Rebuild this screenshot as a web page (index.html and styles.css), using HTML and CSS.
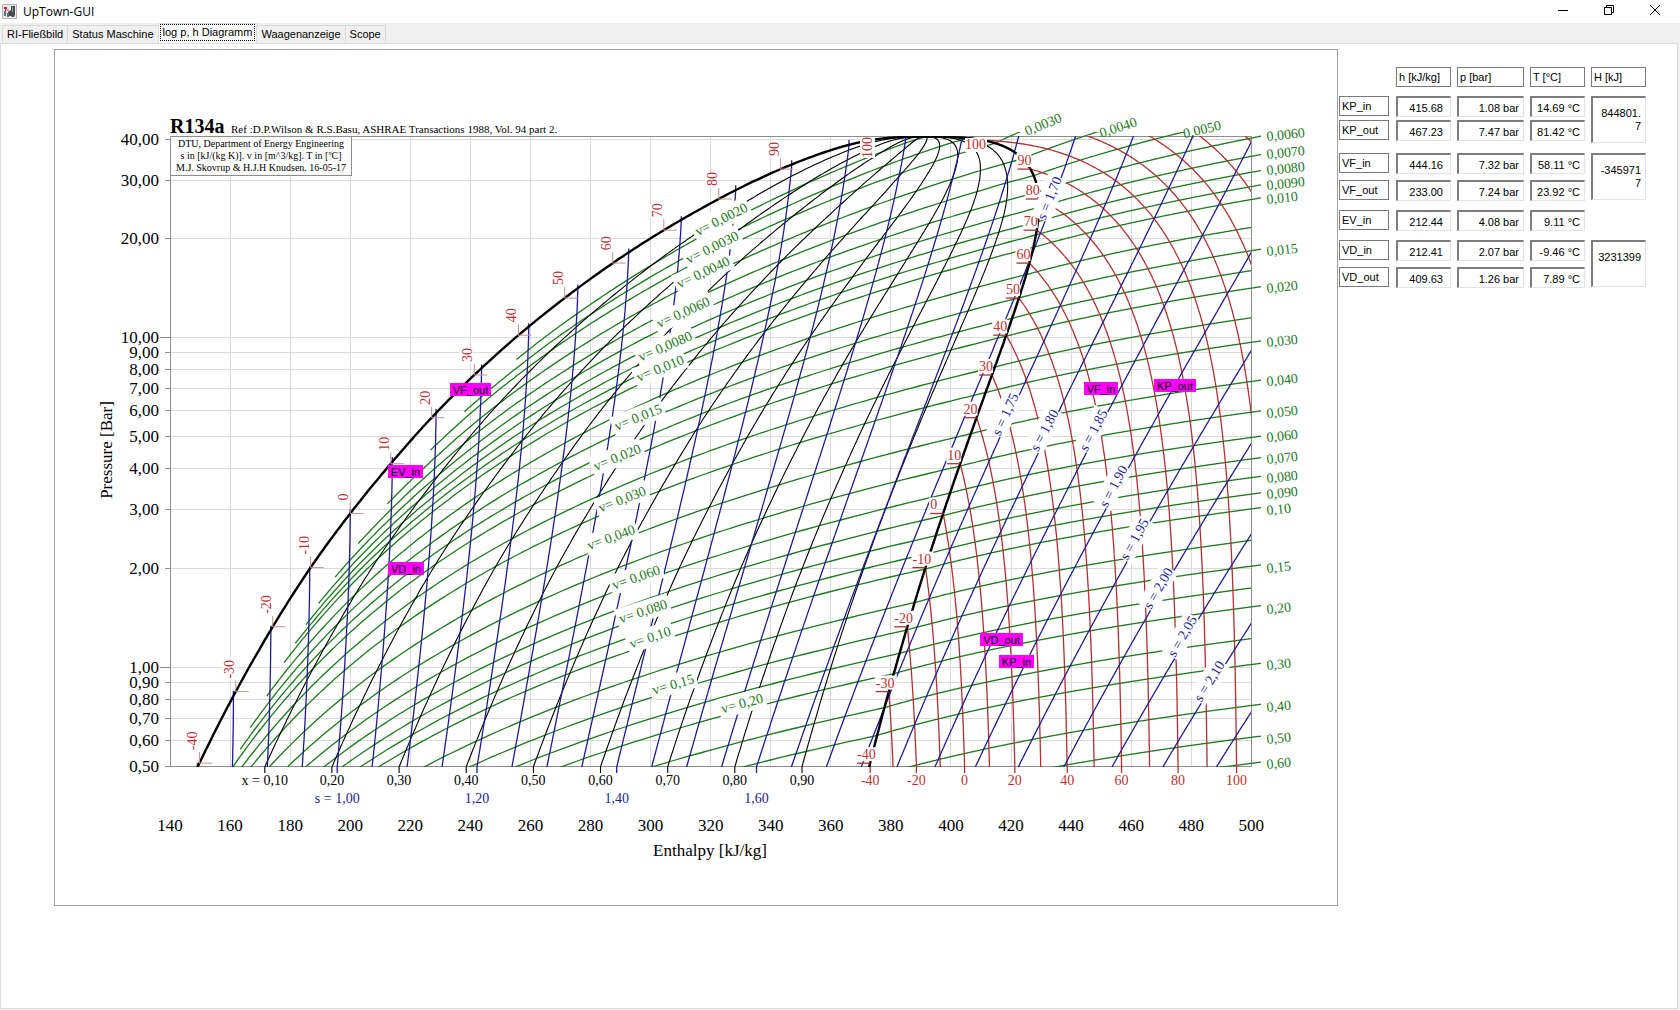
FILE: index.html
```html
<!DOCTYPE html>
<html lang="de">
<head>
<meta charset="utf-8">
<title>UpTown-GUI</title>
<link rel="stylesheet" href="styles.css">
</head>
<body>
<header class="titlebar">
  <svg class="app-icon" viewBox="0 0 15 15" aria-hidden="true">
    <rect x=".5" y=".5" width="14" height="14" fill="#ececec" stroke="#b5b5b5"/>
    <path d="M9 2h4v9l-1 2h-2l-1-1zM6 8l3-2v6H6z" fill="#4a4a4a"/>
    <path d="M10 3h1v5h-1z" fill="#999"/>
    <path d="M2 3h3v2H4v2H3V5H2z" fill="#d02030"/>
    <path d="M2 7h2v5H2zM5 9h2v4H5z" fill="#4c6fa0"/>
    <path d="M4 5h3v2H4z" fill="#e8a0a8"/>
  </svg>
  <span class="app-name">UpTown-GUI</span>
  <div class="window-buttons">
    <button type="button" aria-label="Minimieren"><svg viewBox="0 0 12 12"><path d="M1 6.500h10"/></svg></button>
    <button type="button" aria-label="Wiederherstellen"><svg viewBox="0 0 12 12"><path d="M1.500 3.500h7v7h-7zM3.500 3.500v-2h7v7h-2"/></svg></button>
    <button type="button" aria-label="Schließen"><svg viewBox="0 0 12 12"><path d="M1 1l10 10M11 1L1 11"/></svg></button>
  </div>
</header>
<nav class="tabs" role="tablist">
  <button type="button" role="tab" class="tab">RI-Fließbild</button>
  <button type="button" role="tab" class="tab">Status Maschine</button>
  <button type="button" role="tab" class="tab selected" aria-selected="true"><span class="focus">log p, h Diagramm</span></button>
  <button type="button" role="tab" class="tab">Waagenanzeige</button>
  <button type="button" role="tab" class="tab">Scope</button>
</nav>
<main class="page">
  <figure class="diagram">
    <svg id="chart" viewBox="55 50 1282 855" role="img" aria-label="log p, h Diagramm R134a"></svg>
  </figure>
  <aside class="readings">
    <table>
      <thead>
        <tr><td></td><th scope="col"><span class="name">h [kJ/kg]</span></th><th scope="col"><span class="name">p [bar]</span></th><th scope="col"><span class="name">T [°C]</span></th><th scope="col"><span class="name">H [kJ]</span></th></tr>
      </thead>
      <tbody>
        <tr class="h24"><th scope="row"><span class="name">KP_in</span></th><td><span class="value">415.68</span></td><td><span class="value">1.08 bar</span></td><td><span class="value">14.69 °C</span></td><td rowspan="2"><span class="value total">844801.7</span></td></tr>
        <tr class="h33"><th scope="row"><span class="name">KP_out</span></th><td><span class="value">467.23</span></td><td><span class="value">7.47 bar</span></td><td><span class="value">81.42 °C</span></td></tr>
        <tr class="h27"><th scope="row"><span class="name">VF_in</span></th><td><span class="value">444.16</span></td><td><span class="value">7.32 bar</span></td><td><span class="value">58.11 °C</span></td><td rowspan="2"><span class="value total">-3459717</span></td></tr>
        <tr class="h30"><th scope="row"><span class="name">VF_out</span></th><td><span class="value">233.00</span></td><td><span class="value">7.24 bar</span></td><td><span class="value">23.92 °C</span></td></tr>
        <tr class="h30"><th scope="row"><span class="name">EV_in</span></th><td><span class="value">212.44</span></td><td><span class="value">4.08 bar</span></td><td><span class="value">9.11 °C</span></td><td></td></tr>
        <tr class="h27"><th scope="row"><span class="name">VD_in</span></th><td><span class="value">212.41</span></td><td><span class="value">2.07 bar</span></td><td><span class="value">-9.46 °C</span></td><td rowspan="2"><span class="value total">3231399</span></td></tr>
        <tr class="h24"><th scope="row"><span class="name">VD_out</span></th><td><span class="value">409.63</span></td><td><span class="value">1.26 bar</span></td><td><span class="value">7.89 °C</span></td></tr>
      </tbody>
    </table>
  </aside>
</main>
<script src="chart.js"></script>
</body>
</html>
```
FILE: styles.css
```css
* { box-sizing: border-box; }
body {
  margin: 0;
  min-height: 100vh;
  display: flex;
  flex-direction: column;
  background: #f0f0f0;
  color: #000;
  font: 11px/13px "Liberation Sans", Arial, sans-serif;
}
button { font: inherit; color: inherit; }
.titlebar {
  display: flex;
  align-items: center;
  height: 23px;
  padding: 0 2px;
  background: #fff;
}
.app-icon { width: 15px; height: 15px; }
.app-name { margin-left: 6px; font: 12px/16px "Open Sans", "Noto Sans", sans-serif; }
.window-buttons { margin-left: auto; align-self: flex-start; display: flex; }
.window-buttons button {
  width: 46px;
  height: 20px;
  padding: 0;
  border: 0;
  background: none;
  display: grid;
  place-items: center;
}
.window-buttons svg { width: 12px; height: 12px; fill: none; stroke: #000; }
.tabs { display: flex; align-items: flex-end; height: 20px; padding-left: 2px; }
.tab {
  height: 18px;
  padding: 0 4px;
  border: 1px solid #d9d9d9;
  border-width: 1px 1px 0 0;
  background: #f0f0f0;
  white-space: nowrap;
}
.tab:first-child { border-left-width: 1px; }
.tab.selected { height: 20px; padding: 0 1px 2px; background: #fff; }
.focus { display: block; padding: 1px 2px; border: 1px dotted #000; }
.page {
  flex: 1;
  display: flex;
  align-items: flex-start;
  margin: 0 2px 1px 0;
  padding: 5px 0 24px 53px;
  border: 1px solid #dcdcdc;
  background: #fff;
}
.diagram { flex: 1; min-width: 0; margin: 0; border: 1px solid #a0a0a0; }
.diagram svg { display: block; width: 100%; height: auto; }
.readings { width: 339px; flex: none; padding: 18px 0 0 1px; }
table { border-collapse: collapse; table-layout: fixed; width: 307px; }
td, th { padding: 0 6px 0 0; vertical-align: top; text-align: left; font-weight: normal; }
tr > :nth-child(1) { width: 57px; }
tr > :nth-child(2) { width: 61px; }
tr > :nth-child(3) { width: 73px; }
tr > :nth-child(4) { width: 61px; }
tr > :nth-child(5) { width: 55px; padding-right: 0; }
tr > :nth-child(1) { padding-right: 7px; }
thead tr { height: 29px; }
.h24 { height: 24px; }
.h27 { height: 27px; }
.h30 { height: 30px; }
.h33 { height: 33px; }
.name { display: block; height: 20px; padding: 3px 2px; border: 1px solid #7a7a7a; white-space: nowrap; }
.value {
  display: block;
  height: 21px;
  padding: 4px 4px 0 0;
  border: 1px solid #e3e3e3;
  border-top: 2px solid #7d7d7d;
  border-left: 2px solid #7d7d7d;
  text-align: right;
  white-space: nowrap;
}
td:nth-child(2) .value { padding-right: 7px; }
.total { height: 47px; padding: 9px 4px 0 3px; white-space: normal; word-break: break-all; }

#chart text { font-family: "Liberation Serif", "Times New Roman", serif; font-size: 14px; }
#chart .axis { font-size: 17px; }
#chart .small { font-size: 11px; }
#chart .note { font-size: 10px; }
#chart .title { font-size: 20px; font-weight: bold; }
#chart .tag { font-family: "Liberation Sans", Arial, sans-serif; font-size: 11px; }
#chart path { fill: none; }
.grid { stroke: #dadada; }
.frame { stroke: #8c8c8c; }
.vol { stroke: #1c7a1c; stroke-width: 1.3; }
.temp { stroke: #b23030; stroke-width: 1.3; }
.tick { stroke: #c98f8f; }
.entr { stroke: #1d1d92; stroke-width: 1.3; }
.qual { stroke: #000; stroke-width: 1.1; }
.dome { stroke: #000; stroke-width: 2.400; }
.t-vol { fill: #1c7a1c; }
.t-temp { fill: #c03030; }
.t-entr { fill: #1d1d9c; }
.plate { fill: #fff; }
.pin { fill: #f0f; }
```
FILE: chart.js
```js
// log p,h diagram of R134a, drawn from the Wilson & Basu equation of state.
const NS = 'http://www.w3.org/2000/svg';
const svg = document.getElementById('chart');
function el(name, attrs, text) {
  const e = document.createElementNS(NS, name);
  for (const k in attrs) e.setAttribute(k, attrs[k]);
  if (text !== undefined) e.textContent = text;
  svg.appendChild(e);
  return e;
}
const X = h => 170 + (h - 140) * 3.0036;
const Y = p => 667.3 - 329.7 * Math.log10(p);
const L = 170, R0 = 1251, TOP = 136, BOT = 767;

// Equation of state (kPa, m3/kg, K)
const R = 0.08148816, B = 0.3455467e-3, TC = 374.25, PC = 40.67, K = 5.475;
const A_ = [0, 0, -0.1195051, 0.1447797e-3, -1.049005e-7, -6.953904e-12];
const B_ = [0, 0, 0.1137590e-3, -0.8942552e-7, 0, 1.269806e-13];
const C_ = [0, 0, -3.531592, 0.6469248e-2, 0, -2.051369e-9];
function P(T, v) {
  const e = Math.exp(-K * T / TC), w = v - B;
  let p = R * T / w;
  for (let i = 2; i < 6; i++) p += (A_[i] + B_[i] * T + C_[i] * e) / w ** i;
  return p / 100;
}
function rawH(T, v) {
  const e = Math.exp(-K * T / TC), w = v - B;
  let u = 0;
  for (let i = 2; i < 6; i++) u += (A_[i] + C_[i] * e * (1 + K * T / TC)) / ((i - 1) * w ** (i - 1));
  return -0.005257 * T + 0.00329657 * T * T / 2 - 2.017321e-6 * T ** 3 / 3 + 15.8217 * Math.log(T)
    + u + P(T, v) * 100 * v - R * T;
}
function rawS(T, v) {
  const e = Math.exp(-K * T / TC), w = v - B;
  let s = (-0.005257 - R) * Math.log(T) + 0.00329657 * T - 2.017321e-6 * T * T / 2 - 15.8217 / T + R * Math.log(w);
  for (let i = 2; i < 6; i++) s -= (B_[i] - K / TC * C_[i] * e) / ((i - 1) * w ** (i - 1));
  return s;
}
function vapour(T, p) {
  let v = R * T / (p * 100), last = 0;
  while (P(T, v) < p) {
    const q = P(T, v);
    if (q < last) return v;
    last = q;
    v *= 0.998;
  }
  let a = v, b = v / 0.998;
  for (let i = 0; i < 40; i++) { const m = (a + b) / 2; if (P(T, m) > p) a = m; else b = m; }
  return a;
}
function spline(xs, ys) {
  const n = xs.length, m = Array(n).fill(0), c = Array(n).fill(0), d = Array(n).fill(0);
  for (let i = 1; i < n - 1; i++) {
    const h0 = xs[i] - xs[i - 1], h1 = xs[i + 1] - xs[i];
    const r = 6 * ((ys[i + 1] - ys[i]) / h1 - (ys[i] - ys[i - 1]) / h0);
    const q = 2 * (h0 + h1) - h0 * c[i - 1];
    c[i] = h1 / q; d[i] = (r - h0 * d[i - 1]) / q;
  }
  for (let i = n - 2; i > 0; i--) m[i] = d[i] - c[i] * m[i + 1];
  return x => {
    let i = 0;
    while (i < n - 2 && x > xs[i + 1]) i++;
    const h = xs[i + 1] - xs[i], a = (xs[i + 1] - x) / h, b = (x - xs[i]) / h;
    return a * ys[i] + b * ys[i + 1] + ((a ** 3 - a) * m[i] + (b ** 3 - b) * m[i + 1]) * h * h / 6;
  };
}
const ts = [-50, -40, -30, -20, -10, 0, 10, 20, 30, 40, 50, 60, 70, 80, 90, 100];
const ps = [0.295, 0.512, 0.844, 1.327, 2.006, 2.928, 4.146, 5.717, 7.702, 10.166, 13.18, 16.82, 21.17, 26.33, 32.44, 39.7];
const hls = [137.8, 149.8, 161.9, 174.2, 186.8, 200, 213.5, 227.1, 241.3, 256, 271.4, 287.4, 304.4, 322.7, 343.3, 373.2];
const vls = [0.000691, 0.000705, 0.00072, 0.000736, 0.000754, 0.000772, 0.000793, 0.000816, 0.000842, 0.000872, 0.000907, 0.00095, 0.001004, 0.001077, 0.001194, 0.001536];
const VC = 0.00195;
const v0 = vapour(273.15, 2.928);
const H0 = 397.4 - rawH(273.15, v0), S0 = 1 + 197.4 / 273.15 - rawS(273.15, v0);
const H = (T, v) => rawH(T, v) + H0, S = (T, v) => rawS(T, v) + S0;
const TK = ts.map(t => t + 273.15);
const lnp = spline([...TK, TC], [...ps, PC].map(Math.log));
const psat = T => Math.exp(lnp(T));
const U = T => -(Math.max(0, TC - T) ** 0.36);
const us = [...TK.map(U), 0];
const vgs = TK.map((T, i) => vapour(T, ps[i]));
const hgs = TK.map((T, i) => H(T, vgs[i]));
const vgS = spline(us, [...vgs, VC].map(Math.log));
const vlS = spline(us, [...vls, VC].map(Math.log));
const hgS = spline(us, [...hgs, H(TC, VC)]);
const hlS = spline(us, [...hls, H(TC, VC)]);
const sgS = spline(us, [...TK.map((T, i) => S(T, vgs[i])), S(TC, VC)]);
const vg = T => Math.exp(vgS(U(T))), vl = T => Math.exp(vlS(U(T)));
const hg = T => hgS(U(T)), hl = T => hlS(U(T)), sg = T => sgS(U(T));
const sl = T => sg(T) - (hg(T) - hl(T)) / T;
const range = (a, b, n) => Array.from({ length: n + 1 }, (_, i) => a + (b - a) * i / n);
const domeT = [...range(228, 370, 284), ...range(370.05, TC, 84)];

const defs = el('defs', {});
function clip(id, x, y, w, h) {
  const c = document.createElementNS(NS, 'clipPath');
  c.id = id;
  const r = document.createElementNS(NS, 'rect');
  for (const [k, v] of Object.entries({ x, y, width: w, height: h })) r.setAttribute(k, v);
  c.appendChild(r); defs.appendChild(c);
}
clip('plot', L, TOP, R0 - L, BOT - TOP);
clip('wide', L, 132, 1261 - L, BOT - 132);
function line(pts, cls, id = 'plot') {
  let d = '', pen = false;
  for (const q of pts) {
    if (!q) { pen = false; continue; }
    d += (pen ? 'L' : 'M') + q[0].toFixed(1) + ' ' + q[1].toFixed(1);
    pen = true;
  }
  if (d) el('path', { d, class: cls, 'clip-path': `url(#${id})` });
}
const seg = (x1, y1, x2, y2, cls) => el('path', { d: `M${x1.toFixed(1)} ${y1.toFixed(1)}L${x2.toFixed(1)} ${y2.toFixed(1)}`, class: cls });

// Grid and frame
for (let h = 160; h < 500; h += 20) seg(Math.floor(X(h)) + .5, TOP, Math.floor(X(h)) + .5, BOT, 'grid');
const pv = [0.5, 0.6, 0.7, 0.8, 0.9, 1, 2, 3, 4, 5, 6, 7, 8, 9, 10, 20, 30, 40];
for (const p of pv) {
  const y = Math.floor(Y(p)) + .5;
  seg(L, y, R0, y, 'grid');
  seg(p === 1 || p === 10 ? 160 : 165, y, L, y, 'frame');
  el('text', { x: 159, y: y + 5, 'text-anchor': 'end', class: 'axis' }, p.toFixed(2).replace('.', ','));
}
el('path', { d: `M170.5 136.500H1251.500V766.500H170.500Z`, class: 'frame' });

// Specific volume
const labelled = new Set([.003, .004, .005, .006, .007, .008, .009, .01, .015, .02, .03, .04, .05, .06, .07, .08, .09, .1, .15, .2, .3, .4, .5, .6]);
for (const v of [.002, .0025, .003, .004, .005, .006, .007, .008, .009, .01, .0125, .015, .0175, .02, .025, .03, .04, .05, .06, .07, .08, .09, .1, .125, .15, .175, .2, .25, .3, .4, .5, .6]) {
  const pts = [];
  for (const T of domeT) {
    const x = (v - vl(T)) / (vg(T) - vl(T));
    if (x > .05 && x < 1) pts.push([X(hl(T) + x * (hg(T) - hl(T))), Y(psat(T))]);
  }
  for (const T of range(228, 520, 1168)) if (T > TC || v > vg(T)) pts.push([X(H(T, v)), Y(P(T, v))]);
  line(pts, 'vol', labelled.has(v) ? 'wide' : 'plot');
}
// Vapour quality
for (let x = .1; x < .95; x += .1) {
  line(domeT.map(T => [X(hl(T) + x * (hg(T) - hl(T))), Y(psat(T))]), 'qual');
}
// Temperature
for (let t = -40; t <= 180; t += 10) {
  const T = t + 273.15, pts = [];
  for (const z of range(Math.log(.0018), Math.log(.8), 600)) {
    const v = Math.exp(z);
    if (T > TC || v > vg(T)) pts.push([X(H(T, v)), Y(P(T, v))]);
  }
  line(pts, 'temp');
}
// Entropy
for (let k = 16; k <= 46; k++) {
  const s = k * .05, pts = [];
  let top = null;
  for (const T of domeT) {
    const h = hl(T) + T * (s - sl(T));
    if (h >= hl(T) && h <= hg(T)) { top = [X(h), Y(psat(T))]; pts.push(top); } else pts.push(null);
  }
  if (s < 1.52 && top) { pts.push(top); pts.push([top[0], top[1] - 5]); }
  pts.push(null);
  for (const z of range(Math.log(.8), Math.log(.0018), 700)) {
    const v = Math.exp(z);
    let a = 220, b = 560;
    for (let i = 0; i < 30; i++) { const m = (a + b) / 2; if (S(m, v) > s) b = m; else a = m; }
    pts.push(a > TC || v > vg(a) ? [X(H(a, v)), Y(P(a, v))] : null);
  }
  line(pts, 'entr');
}
// Saturation dome
line([...domeT.map(T => [X(hl(T)), Y(psat(T))]), ...domeT.slice().reverse().map(T => [X(hg(T)), Y(psat(T))])], 'dome');

function label(cls, x, y, angle, text, w) {
  const g = { transform: `translate(${x} ${y}) rotate(${angle})` };
  el('rect', { ...g, x: -w / 2, y: -10, width: w, height: 20, class: 'plate' });
  el('text', { ...g, x: 0, y: 5, 'text-anchor': 'middle', class: cls }, text);
}
// Saturation temperature marks
for (let t = -40; t <= 100; t += 10) {
  const T = t + 273.15, y = Y(psat(T)), xl = X(hl(T)), xr = X(hg(T)), w = String(t).length * 7;
  if (t < 100) {
    seg(xl, y - 11, xl, y, 'tick');
    seg(xl, y, xl + 13, y, 'tick');
    el('rect', { x: xl - 14, y: y - 12 - w, width: 13, height: w, class: 'plate' });
    el('text', { transform: `translate(${xl - 2} ${y - 13}) rotate(-90)`, class: 't-temp' }, t);
    el('rect', { x: xr - 14, y: y - 16, width: w + 1, height: 14, class: 'plate' });
    seg(xr - 13, y, xr, y, 'temp');
    el('text', { x: xr - 13, y: y - 4, class: 't-temp' }, t);
  } else {
    el('rect', { x: 860, y: 137, width: 15, height: 21, class: 'plate' });
    el('text', { transform: 'translate(872 158) rotate(-90)', class: 't-temp' }, t);
    el('rect', { x: 965, y: 138, width: 22, height: 14, class: 'plate' });
    el('text', { x: 965, y: 149, class: 't-temp' }, t);
  }
}
[['0,0020', 721, 219, -27], ['0,0030', 712, 247, -26], ['0,0040', 703, 272, -25], ['0,0060', 683, 312, -24],
 ['0,0080', 665, 346, -23], ['0,010', 660, 368, -22], ['0,015', 638, 417, -22], ['0,020', 617, 457, -22],
 ['0,030', 622, 499, -21], ['0,040', 611, 537, -20], ['0,060', 636, 577, -19], ['0,080', 643, 611, -18],
 ['0,10', 650, 637, -18], ['0,15', 673, 684, -16], ['0,20', 742, 703, -15]
].forEach(([t, x, y, a]) => label('t-vol', x, y, a, 'v= ' + t, 20 + t.length * 7));
[['1,70', 1049, 198, -68], ['1,75', 1005, 414, -65], ['1,80', 1044, 430, -62], ['1,85', 1093, 430, -62], ['1,90', 1113, 486, -62],
 ['1,95', 1134, 539, -61], ['2,00', 1158, 588, -60], ['2,05', 1182, 636, -60], ['2,10', 1209, 681, -58]
].forEach(([t, x, y, a]) => label('t-entr', x, y, a, 's = ' + t, 46));
[['0,0060', 134], ['0,0070', 152], ['0,0080', 168], ['0,0090', 183], ['0,010', 197], ['0,015', 249], ['0,020', 286], ['0,030', 340],
 ['0,040', 379], ['0,050', 411], ['0,060', 435], ['0,070', 457], ['0,080', 476], ['0,090', 492], ['0,10', 508],
 ['0,15', 566], ['0,20', 607], ['0,30', 663], ['0,40', 705], ['0,50', 737], ['0,60', 762]
].forEach(([t, y]) => el('text', { transform: `translate(1267 ${y + 7}) rotate(-6)`, class: 't-vol' }, t));
[['0,0030', 1043, 124, -22], ['0,0040', 1118, 127, -18], ['0,0050', 1202, 129, -13]
].forEach(([t, x, y, a]) => el('text', { transform: `translate(${x} ${y}) rotate(${a})`, y: 5, 'text-anchor': 'middle', class: 't-vol' }, t));

// Scales below the plot
const TB = 273.15 - 40.5;
for (let i = 1; i < 10; i++) {
  const x = X(hl(TB) + i / 10 * (hg(TB) - hl(TB)));
  seg(x, BOT, x, 773, 'qual');
  el('text', { x, y: 785, 'text-anchor': 'middle' }, (i === 1 ? 'x = ' : '') + '0,' + i + '0');
}
for (const s of [1, 1.2, 1.4, 1.6]) {
  const x = X(hl(TB) + TB * (s - sl(TB)));
  seg(x, BOT, x, 773, 'entr');
  el('text', { x, y: 803, 'text-anchor': 'middle', class: 't-entr' }, (s === 1 ? 's = ' : '') + s.toFixed(2).replace('.', ','));
}
for (let t = -40; t <= 100; t += 20) {
  const T = t + 273.15, x = X(H(T, vapour(T, .5)));
  seg(x, BOT, x, 773, 'temp');
  el('text', { x, y: 785, 'text-anchor': 'middle', class: 't-temp' }, t);
}
for (let h = 140; h <= 500; h += 20) el('text', { x: X(h), y: 831, 'text-anchor': 'middle', class: 'axis' }, h);
el('text', { x: 710, y: 856, 'text-anchor': 'middle', class: 'axis' }, 'Enthalpy [kJ/kg]');
el('text', { transform: 'translate(112 450) rotate(-90)', 'text-anchor': 'middle', class: 'axis' }, 'Pressure [Bar]');

// Heading
el('text', { x: 170, y: 133, class: 'title' }, 'R134a');
el('text', { x: 231, y: 133, class: 'small' }, 'Ref :D.P.Wilson & R.S.Basu, ASHRAE Transactions 1988, Vol. 94 part 2.');
el('rect', { x: 170.5, y: 136.5, width: 181, height: 39, class: 'plate frame' });
['DTU, Department of Energy Engineering', 's in [kJ/(kg K)]. v in [m^3/kg]. T in [ºC]', 'M.J. Skovrup & H.J.H Knudsen. 16-05-17']
  .forEach((t, i) => el('text', { x: 261, y: 147 + 12 * i, 'text-anchor': 'middle', class: 'note' }, t));

// Operating points
[['VF_out', 450, 383, 41], ['EV_in', 388, 465, 35], ['VD_in', 388, 562, 36], ['VF_in', 1084, 382, 34],
 ['KP_out', 1154, 379, 42], ['VD_out', 980, 633, 43], ['KP_in', 999, 655, 35]
].forEach(([t, x, y, w]) => {
  el('rect', { x, y, width: w, height: 13, class: 'pin' });
  el('text', { x: x + w / 2, y: y + 11, 'text-anchor': 'middle', class: 'tag' }, t);
});
```
